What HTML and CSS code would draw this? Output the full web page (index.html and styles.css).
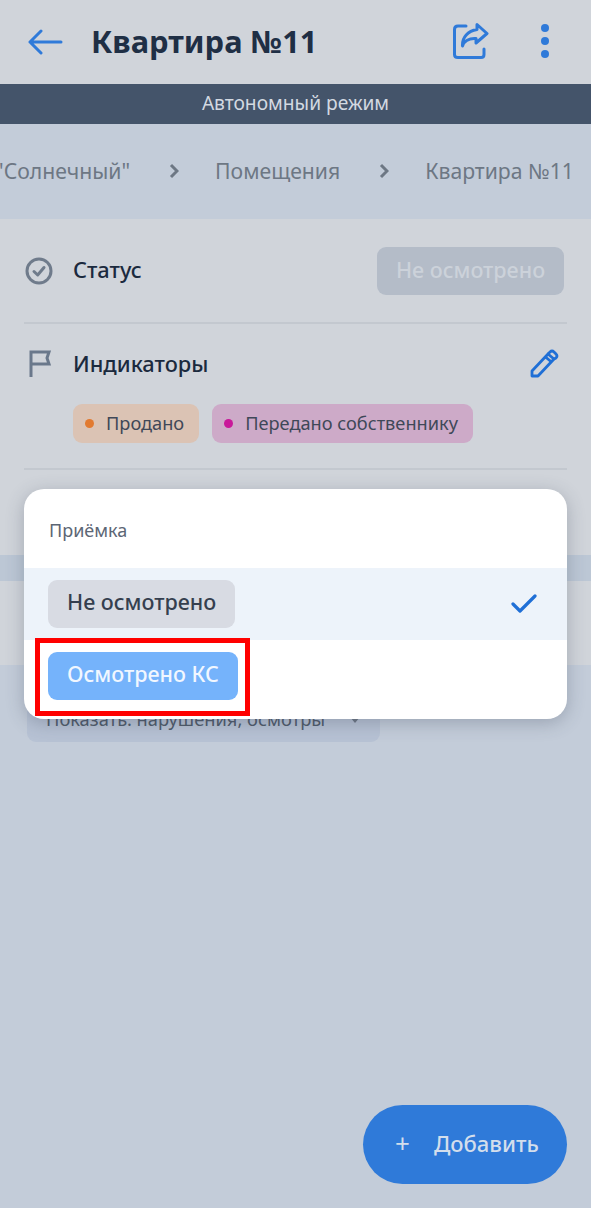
FILE: index.html
```html
<!DOCTYPE html>
<html lang="ru">
<head>
  <meta charset="UTF-8" />
  <title>Квартира №11</title>
  <link rel="stylesheet" href="styles.css">
</head>
<body>
  <div class="screen">
    <header class="topbar">
      <svg class="back" width="36" height="26" viewBox="0 0 36 26" fill="none" stroke="#2f7ad9" stroke-width="3" stroke-linecap="round" stroke-linejoin="round">
        <path d="M2 13H33M13 2L2 13L13 24"/>
      </svg>
      <h1>Квартира №11</h1>
      <svg class="share" width="36" height="36" viewBox="0 0 36 36" fill="none" stroke="#2f7ad9" stroke-width="3" stroke-linecap="round" stroke-linejoin="round">
        <path d="M13 3H5Q1.500 3 1.500 6.500V31.500Q1.500 34.500 5 34.500H28Q31 34.500 31 31.500V26"/>
        <path d="M24 1.500L34 10.500L23 20V15.500C16 15 11 18 9.500 23C9 14 15 8 24 6.500Z"/>
      </svg>
      <div class="dots"><i></i><i></i><i></i></div>
    </header>

    <div class="offline">Автономный режим</div>

    <nav class="crumbs">
      <span>"Солнечный"</span>
      <svg width="10" height="16" viewBox="0 0 10 16" fill="none" stroke="#6d7784" stroke-width="3"><path d="M2 2L8 8L2 14"/></svg>
      <span>Помещения</span>
      <svg width="10" height="16" viewBox="0 0 10 16" fill="none" stroke="#6d7784" stroke-width="3"><path d="M2 2L8 8L2 14"/></svg>
      <span>Квартира №11</span>
    </nav>

    <section class="info">
      <div class="row status-row">
        <svg width="28" height="28" viewBox="0 0 28 28" fill="none" stroke="#6f7b8b" stroke-width="3" stroke-linecap="round" stroke-linejoin="round">
          <circle cx="14" cy="14" r="12"/><path d="M9 14.500L12.700 18L19 10.500"/>
        </svg>
        <span class="row-title">Статус</span>
        <span class="status-btn">Не осмотрено</span>
      </div>
      <div class="indicators">
        <div class="row ind-head">
          <svg width="28" height="28" viewBox="0 0 28 28" fill="none" stroke="#6a788b" stroke-width="3">
            <path d="M6 27V2H24L22 8L24 14H6"/>
          </svg>
          <span class="row-title">Индикаторы</span>
          <svg class="pencil" width="30" height="30" viewBox="0 0 30 30" fill="none" stroke="#1f6fd6" stroke-width="2.800" stroke-linejoin="round">
            <path d="M3 22L19 5L25 10L9 27L3 27Z"/><path d="M19 5L21 3Q23 1 25 3L27 5Q29 7 27 9L25 10M16.500 8L22.500 13"/>
          </svg>
        </div>
        <div class="tags">
          <span class="tag tag-sold"><i></i>Продано</span>
          <span class="tag tag-owner"><i></i>Передано собственнику</span>
        </div>
      </div>
    </section>

    <div class="strip"></div>
    <div class="tabs"></div>

    <div class="filter-wrap">
      <div class="filter">
        <span>Показать: нарушения, осмотры</span>
        <svg width="12" height="8" viewBox="0 0 12 8" fill="#6d7784"><path d="M1 1H11L6 7Z"/></svg>
      </div>
    </div>

    <div class="fab"><span class="plus">+</span>Добавить</div>

    <div class="popup">
      <div class="popup-title">Приёмка</div>
      <div class="option selected">
        <span class="chip chip-grey">Не осмотрено</span>
        <svg width="26" height="20" viewBox="0 0 26 20" fill="none" stroke="#1f6fd6" stroke-width="3.200" stroke-linecap="round" stroke-linejoin="round"><path d="M2 10L9 17L24 2"/></svg>
      </div>
      <div class="option">
        <span class="chip chip-blue">Осмотрено КС</span>
      </div>
    </div>

    <div class="highlight"></div>
  </div>
</body>
</html>
```

FILE: styles.css
```css
* {
  box-sizing: border-box;
}
body {
  margin: 0;
  font-family: 'Noto Sans', sans-serif;
  background: #c3ccd9;
}
.screen {
  position: relative;
  width: 591px;
  height: 1208px;
  overflow: hidden;
  background: #c3ccd9;
}
.topbar {
  height: 84px;
  background: #d0d4da;
  display: flex;
  align-items: center;
  padding: 0 42px 0 28px;
}
.topbar h1 {
  margin: 0 0 2px 27px;
  font-size: 30.800px;
  font-weight: 700;
  color: #1f2f45;
  flex: 1;
}
.share {
  margin: 0 52px 2px 0;
}
.dots {
  display: flex;
  flex-direction: column;
  gap: 5px;
  margin-bottom: 2px;
}
.dots i {
  display: block;
  width: 8px;
  height: 8px;
  border-radius: 50%;
  background: #2f7ad9;
}
.offline {
  height: 40px;
  background: #44546a;
  color: #d3d9e1;
  font-size: 19.200px;
  text-align: center;
  line-height: 38px;
}
.crumbs {
  height: 95px;
  display: flex;
  align-items: center;
  font-size: 21.200px;
  color: #6d7784;
  white-space: nowrap;
  margin-left: -5px;
  padding-bottom: 2px;
}
.crumbs svg {
  margin: 0 36px 0 39px;
}
.info {
  height: 336px;
  background: #d0d4da;
  padding: 0 24px;
}
.row {
  display: flex;
  align-items: center;
}
.row svg:first-child {
  margin-left: 1px;
  flex: none;
}
.row-title {
  font-size: 21.800px;
  font-weight: 500;
  color: #1b2a3e;
  margin: 0 0 2px 20px;
  flex: 1;
}
.status-row {
  height: 105px;
  border-bottom: 2px solid #c3c8cf;
  padding-right: 3px;
}
.status-btn {
  width: 187px;
  height: 48px;
  border-radius: 9px;
  background: #b4bcc8;
  color: #ccd2da;
  font-size: 21.500px;
  font-weight: 500;
  text-align: center;
  line-height: 45px;
}
.indicators {
  height: 146px;
  border-bottom: 2px solid #c3c8cf;
}
.ind-head {
  height: 80px;
}
.pencil {
  margin-right: 8px;
}
.tags {
  display: flex;
  gap: 13px;
  margin-left: 49px;
}
.tag {
  height: 39px;
  border-radius: 9px;
  display: flex;
  align-items: center;
  font-size: 18.200px;
  padding: 0 15px 1px 12px;
  color: #3f4858;
}
.tag i {
  width: 9px;
  height: 9px;
  border-radius: 50%;
  margin-right: 12px;
}
.tag-sold {
  background: #dbc3b4;
}
.tag-sold i {
  background: #e27a30;
}
.tag-owner {
  background: #cdaac8;
}
.tag-owner i {
  background: #c9189a;
}
.strip {
  height: 26px;
  background: #bcc7d5;
}
.tabs {
  height: 84px;
  background: #d0d4da;
}
.filter-wrap {
  padding: 0 27px;
  margin-top: -16px;
}
.filter {
  width: 353px;
  height: 93px;
  margin-top: -16px;
  padding: 0 19px 11px;
  border-radius: 9px;
  background: #b7c2d4;
  color: #4f5a6a;
  font-size: 18.300px;
  display: flex;
  align-items: flex-end;
  justify-content: space-between;
}
.filter svg {
  margin-bottom: 7px;
}
.fab {
  position: absolute;
  left: 363px;
  top: 1105px;
  width: 204px;
  height: 79px;
  border-radius: 40px;
  background: #2f7ad9;
  color: #d3deec;
  font-size: 22px;
  font-weight: 500;
  display: flex;
  align-items: center;
  padding: 0 0 3px 32px;
}
.plus {
  font-size: 26px;
  font-weight: 400;
  margin-right: 24px;
}
.popup {
  position: absolute;
  left: 24px;
  top: 489px;
  width: 543px;
  height: 230px;
  background: #fff;
  border-radius: 20px;
  box-shadow: 0 4px 18px rgba(60, 70, 90, 0.3);
  overflow: hidden;
}
.popup-title {
  height: 79px;
  padding: 29px 25px 0;
  font-size: 18px;
  color: #5c6675;
}
.option {
  height: 72px;
  display: flex;
  align-items: center;
  justify-content: space-between;
  padding: 0 30px 0 24px;
}
.selected {
  background: #edf3fa;
}
.chip {
  height: 48px;
  border-radius: 9px;
  padding: 0 19px;
  font-size: 21.500px;
  font-weight: 500;
  line-height: 44px;
}
.chip-grey {
  background: #d8dbe3;
  color: #353f4f;
}
.chip-blue {
  background: #75b3fb;
  color: #f1f7ff;
}
.highlight {
  position: absolute;
  left: 35px;
  top: 638px;
  width: 215px;
  height: 78px;
  border: 5px solid #ff0000;
}
```
